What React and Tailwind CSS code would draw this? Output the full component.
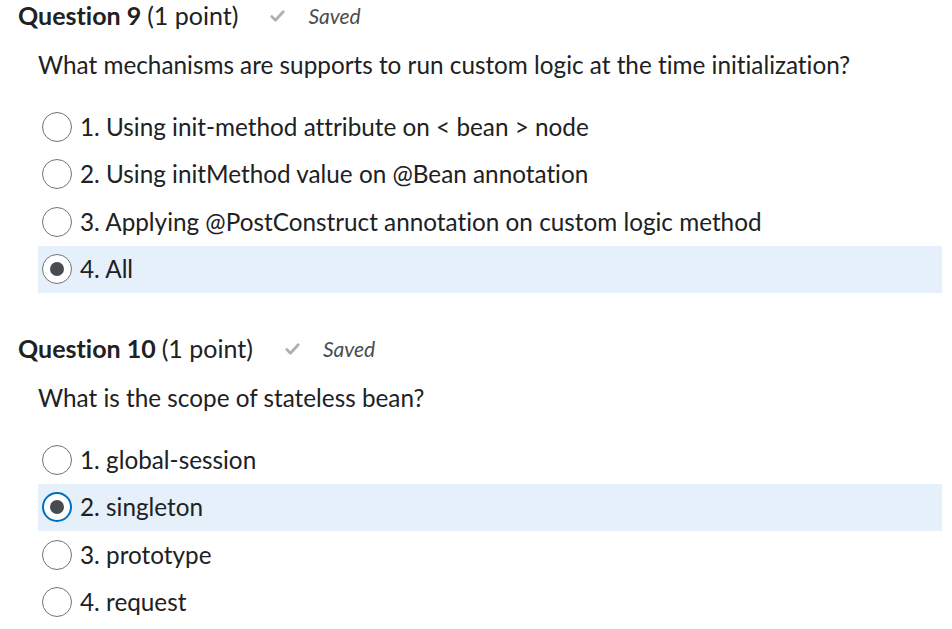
const questions = [
  {
    num: 9,
    text: "What mechanisms are supports to run custom logic at the time initialization?",
    options: [
      "1. Using init-method attribute on < bean > node",
      "2. Using initMethod value on @Bean annotation",
      "3. Applying @PostConstruct annotation on custom logic method",
      "4. All",
    ],
    selected: 3,
    focused: false,
  },
  {
    num: 10,
    text: "What is the scope of stateless bean?",
    options: ["1. global-session", "2. singleton", "3. prototype", "4. request"],
    selected: 1,
    focused: true,
  },
];

function Check() {
  return (
    <svg width="15" height="14" viewBox="0 0 15 14" fill="none">
      <path d="M1.8 7.6 L5.4 11.2 L13.2 2.8" stroke="#aeb1b3" strokeWidth="2.8" strokeLinecap="round" strokeLinejoin="round" />
    </svg>
  );
}

function Radio({ checked, focused }) {
  return (
    <span
      className={
        "flex h-[30px] w-[30px] shrink-0 items-center justify-center rounded-full bg-white " +
        (focused ? "border-2 border-[#006fbf]" : "border border-[#6e7376]")
      }
    >
      {checked && <span className="h-[14px] w-[14px] rounded-full bg-[#494c4e]" />}
    </span>
  );
}

function Question({ q }) {
  return (
    <div>
      <div className="flex h-[32px] items-center pl-[18px]">
        <span className="text-[25px] font-bold text-[#202122]">Question {q.num}</span>
        <span className="ml-[6px] text-[25px] text-[#202122]">(1 point)</span>
        <span className="ml-[32px] flex items-center">
          <Check />
        </span>
        <span className="ml-[23px] text-[21px] italic text-[#494c4e]">Saved</span>
      </div>
      <div className="mt-[17px] flex h-[32px] items-center pl-[38px] text-[24.3px] text-[#202122]">
        {q.text}
      </div>
      <div className="mt-[22px] ml-[38px] mr-[10px] flex flex-col">
        {q.options.map((opt, i) => (
          <div
            key={i}
            className={
              "flex h-[47.5px] items-center gap-[8px] pl-[4px] " +
              (i === q.selected ? "bg-[#e6f0fa]" : "")
            }
          >
            <Radio checked={i === q.selected} focused={q.focused && i === q.selected} />
            <span className="text-[24.3px] text-[#202122]">{opt}</span>
          </div>
        ))}
      </div>
    </div>
  );
}

export default function App() {
  return (
    <div
      className="min-h-screen w-[952px] bg-white [font-variant-ligatures:none]"
      style={{ fontFamily: "Lato, 'Noto Sans', sans-serif" }}
    >
      <Question q={questions[0]} />
      <div className="mt-[40px]">
        <Question q={questions[1]} />
      </div>
    </div>
  );
}
